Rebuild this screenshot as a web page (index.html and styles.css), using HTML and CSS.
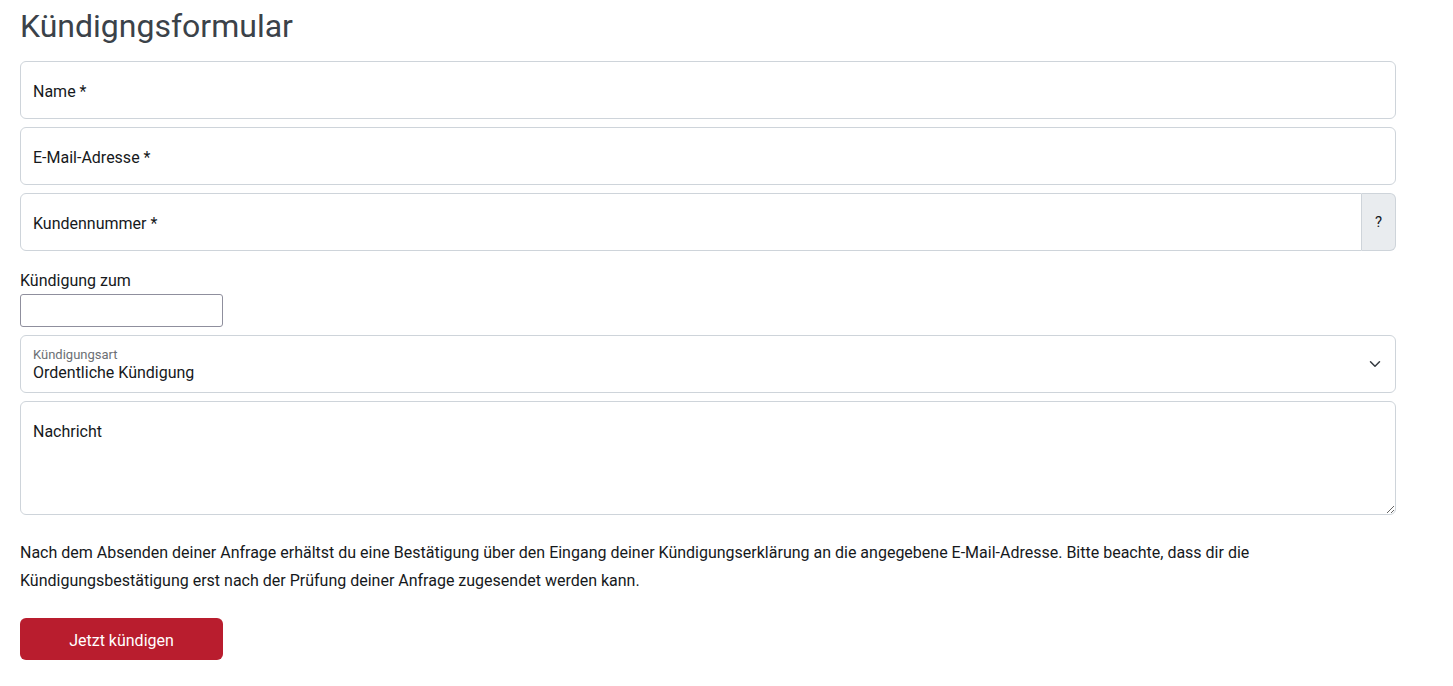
FILE: index.html
```html
<!DOCTYPE html>
<html lang="de">
<head>
  <meta charset="UTF-8" />
  <meta name="viewport" content="width=device-width, initial-scale=1.0"/>
  <title>Kündigungsformular</title>
  <link rel="stylesheet" href="styles.css">
</head>
<body>
  <div class="container">
    <h2 class="title">Kündigngsformular</h2>

    <form class="cancel-form">
      <div class="floating">
        <input type="text" id="name" class="control" />
        <label for="name">Name *</label>
      </div>

      <div class="floating">
        <input type="email" id="email" class="control" />
        <label for="email">E-Mail-Adresse *</label>
      </div>

      <div class="input-group">
        <div class="floating grow">
          <input type="text" id="customer" class="control" />
          <label for="customer">Kundennummer *</label>
        </div>
        <span class="addon">?</span>
      </div>

      <div class="date-row">
        <label for="date" class="plain-label">Kündigung zum</label>
        <input type="text" id="date" class="date-input" />
      </div>

      <div class="floating">
        <select id="type" class="control select">
          <option>Ordentliche Kündigung</option>
          <option>Außerordentliche Kündigung</option>
        </select>
        <label for="type" class="small-label">Kündigungsart</label>
        <svg class="chevron" width="16" height="12" viewBox="0 0 16 16" aria-hidden="true">
          <path d="m2 5 6 6 6-6" fill="none" stroke="#343a40" stroke-width="2" stroke-linecap="round" stroke-linejoin="round"/>
        </svg>
      </div>

      <div class="floating">
        <textarea id="message" class="control area"></textarea>
        <label for="message">Nachricht</label>
      </div>

      <p class="note">Nach dem Absenden deiner Anfrage erhältst du eine Bestätigung über den Eingang deiner Kündigungserklärung an die angegebene E-Mail-Adresse. Bitte beachte, dass dir die Kündigungsbestätigung erst nach der Prüfung deiner Anfrage zugesendet werden kann.</p>

      <button type="submit" class="submit">Jetzt kündigen</button>
    </form>
  </div>
</body>
</html>
```

FILE: styles.css
```css
* {
  box-sizing: border-box;
}

body {
  margin: 0;
  font-family: Roboto, "Liberation Sans", sans-serif;
  font-size: 16px;
  line-height: 1.5;
  color: #16191c;
  background: white;
}

.container {
  padding: 0 57px 0 20px;
}

.title {
  margin: 7px 0 16px;
  font-size: 32px;
  font-weight: 400;
  line-height: 38px;
  color: #3b4249;
}

.floating {
  position: relative;
  margin-bottom: 8px;
}

.control {
  display: block;
  width: 100%;
  height: 58px;
  padding: 26px 12px 8px;
  font: inherit;
  color: inherit;
  background: white;
  border: 1px solid #ced4da;
  border-radius: 6px;
  outline: none;
}

.floating label {
  position: absolute;
  top: 0;
  left: 0;
  padding: 19px 13px 15px;
  line-height: 24px;
  pointer-events: none;
}

/* Kundennummer with the help addon */
.input-group {
  display: flex;
  margin-bottom: 8px;
}

.input-group .floating {
  margin-bottom: 0;
}

.grow {
  flex: 1;
}

.input-group .control {
  border-radius: 6px 0 0 6px;
}

.addon {
  width: 34px;
  display: flex;
  align-items: center;
  justify-content: center;
  padding-top: 1px;
  background: #e9ecef;
  border: 1px solid #ced4da;
  border-left: none;
  border-radius: 0 6px 6px 0;
  font-size: 15px;
}

.date-row {
  margin-top: 18px;
  margin-bottom: 8px;
}

.plain-label {
  display: block;
  line-height: 24px;
  margin-bottom: 1px;
}

.date-input {
  display: block;
  width: 203px;
  height: 33px;
  font: inherit;
  border: 1px solid #8f8f9d;
  border-radius: 3px;
  padding: 2px 4px;
}

.select {
  appearance: none;
  -webkit-appearance: none;
  padding: 25px 36px 7px 12px;
  line-height: 24px;
}

.floating .small-label {
  padding: 10px 13px;
  font-size: 13px;
  line-height: 20px;
  color: #6c7074;
}

.chevron {
  position: absolute;
  right: 13px;
  top: 23px;
  pointer-events: none;
}

.area {
  height: 114px;
  resize: vertical;
}

.note {
  margin: 24px 0 23px;
  line-height: 28px;
  font-size: 16px;
}

.submit {
  width: 203px;
  height: 42px;
  padding: 4px 0 0;
  border: none;
  border-radius: 6px;
  background: #b91d2e;
  color: white;
  font: inherit;
  cursor: pointer;
}
```
